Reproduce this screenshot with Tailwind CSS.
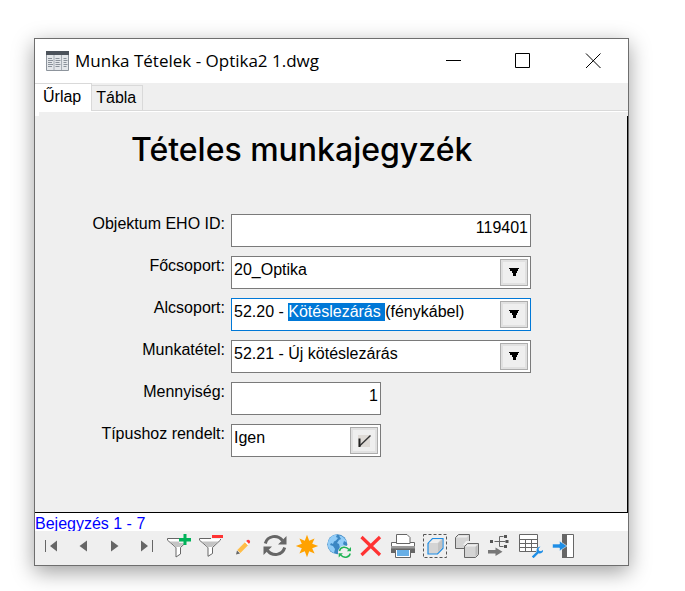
<!DOCTYPE html>
<html lang="hu">
<head>
<meta charset="utf-8">
<meta name="viewport" content="width=device-width, initial-scale=1">
<title>Munka Tételek - Optika2 1.dwg</title>
<script src="https://cdn.jsdelivr.net/npm/@tailwindcss/browser@4"></script>
</head>
<body class="flex min-h-screen bg-white pt-[38px] pr-14 pb-[25px] pl-[34px] font-['Liberation_Sans',Arial,sans-serif] text-base text-black">
<div class="flex min-w-0 flex-1 flex-col border border-[#6e6e6e] bg-[#efefef] shadow-[0_6px_20px_rgba(0,0,0,0.38)]">
  <header class="flex h-11 shrink-0 items-center bg-white pl-[11px]">
    <svg class="h-5 w-[23px] shrink-0" viewBox="0 0 23 20" aria-hidden="true">
      <path fill="#e4e7ea" stroke="#8d949c" d="M.5.5h22v19H.5z"/>
      <path fill="#4c535b" d="M0 0h23v4H0z"/>
      <path stroke="#a8aeb5" d="M8 4v15M15.500 4v15"/>
      <path stroke="#8b929a" d="M2 7.500h4M2 9.500h5M2 11.500h4M2 13.500h5M2 15.500h4M9.500 7.500h4M9.500 9.500h5M9.500 11.500h4M9.500 13.500h5M9.500 15.500h4M17.500 7.500h3M17.500 9.500h4M17.500 11.500h3M17.500 13.500h4M17.500 15.500h3"/>
    </svg>
    <h1 class="min-w-0 flex-1 truncate pl-1.5 font-['Open_Sans',sans-serif] text-[17px]">Munka Tételek - Optika2 1.dwg</h1>
    <button type="button" aria-label="Kis méret" class="grid h-11 w-[70px] place-items-center"><svg class="size-4" viewBox="0 0 16 16"><path stroke="#000" d="M1 7.500h15"/></svg></button>
    <button type="button" aria-label="Teljes méret" class="grid h-11 w-[70px] place-items-center"><svg class="size-4" viewBox="0 0 16 16"><path fill="none" stroke="#000" d="M.5.5h14v14H.5z"/></svg></button>
    <button type="button" aria-label="Bezárás" class="grid h-11 w-[70px] place-items-center"><svg class="size-4" viewBox="0 0 16 16"><path stroke="#000" d="M1 .5l14.500 14.500M15.500.5L1 15"/></svg></button>
  </header>

  <div role="tablist" class="flex h-7 shrink-0 items-end border-b border-[#d9d9d9]">
    <button role="tab" aria-selected="true" type="button" class="-mb-px flex h-7 items-center border-t border-r border-[#d9d9d9] bg-white pr-2.5 pb-0.5 pl-2">Űrlap</button>
    <button role="tab" aria-selected="false" type="button" class="flex h-[25px] items-center border-t border-r border-[#d9d9d9] pr-1.5 pl-1">Tábla</button>
  </div>
  <div class="h-[5px] shrink-0 border-t border-l-4 border-white"></div>

  <main class="flex-1 border-r border-b border-black pb-[55px]">
    <h2 class="pt-[14px] pl-24 font-['Inter','Liberation_Sans',sans-serif] text-[32px] leading-10 font-medium">Tételes munkajegyzék</h2>
    <form class="mt-11 grid grid-cols-[190px_minmax(0,300px)] gap-x-1.5 gap-y-[9px]">
      <label for="eho" class="pt-px text-right leading-[18px]">Objektum EHO ID:</label>
      <input id="eho" value="119401" class="h-[33px] w-full border border-[#7a7a7a] bg-white px-0.5 pb-1.5 text-right outline-none">

      <label for="fo" class="pt-px text-right leading-[18px]">Főcsoport:</label>
      <div class="flex h-[33px] items-center border border-[#7a7a7a] bg-white pr-0.5 pl-0.5">
        <input id="fo" role="combobox" aria-expanded="false" value="20_Optika" class="h-full min-w-0 flex-1 pb-1.5 outline-none">
        <button type="button" aria-label="Főcsoport listája" class="grid h-[27px] w-7 place-items-center border border-[#adadad] bg-[#efefef] pb-0.5 shadow-[inset_0_0_0_2px_#e1e1e1]"><svg class="h-2 w-2.5" viewBox="0 0 10 8"><path d="M0 0h10v1H9v2H8v2H7v3H4V5H3V3H1V1H0z"/></svg></button>
      </div>

      <label for="al" class="pt-px text-right leading-[18px]">Alcsoport:</label>
      <div class="flex h-[33px] items-center border border-[#0078d7] bg-white pr-0.5 pl-0.5">
        <input id="al" role="combobox" aria-expanded="false" autofocus value="52.20 - Kötéslezárás (fénykábel)" class="h-full min-w-0 flex-1 pb-1.5 outline-none selection:bg-[#0078d7] selection:text-white">
        <button type="button" aria-label="Alcsoport listája" class="grid h-[27px] w-7 place-items-center border border-[#adadad] bg-[#efefef] pb-0.5 shadow-[inset_0_0_0_2px_#e1e1e1]"><svg class="h-2 w-2.5" viewBox="0 0 10 8"><path d="M0 0h10v1H9v2H8v2H7v3H4V5H3V3H1V1H0z"/></svg></button>
      </div>

      <label for="mt" class="pt-px text-right leading-[18px]">Munkatétel:</label>
      <div class="flex h-[33px] items-center border border-[#7a7a7a] bg-white pr-0.5 pl-0.5">
        <input id="mt" role="combobox" aria-expanded="false" value="52.21 - Új kötéslezárás" class="h-full min-w-0 flex-1 pb-1.5 outline-none">
        <button type="button" aria-label="Munkatétel listája" class="grid h-[27px] w-7 place-items-center border border-[#adadad] bg-[#efefef] pb-0.5 shadow-[inset_0_0_0_2px_#e1e1e1]"><svg class="h-2 w-2.5" viewBox="0 0 10 8"><path d="M0 0h10v1H9v2H8v2H7v3H4V5H3V3H1V1H0z"/></svg></button>
      </div>

      <label for="me" class="pt-px text-right leading-[18px]">Mennyiség:</label>
      <input id="me" value="1" class="h-[33px] w-1/2 border border-[#7a7a7a] bg-white px-0.5 pb-1.5 text-right outline-none">

      <label for="ti" class="pt-px text-right leading-[18px]">Típushoz rendelt:</label>
      <div class="flex h-[33px] w-1/2 items-center border border-[#7a7a7a] bg-white pr-0.5 pl-0.5">
        <input id="ti" value="Igen" class="h-full min-w-0 flex-1 pb-1.5 outline-none">
        <button type="button" aria-label="Igen vagy nem" class="grid h-[27px] w-7 place-items-center border border-[#adadad] bg-[#efefef] shadow-[inset_0_0_0_2px_#e1e1e1]"><svg class="h-3 w-[13px]" viewBox="0 0 13 12"><path fill="#dedad6" d="M0 0h12v12H0z"/><path fill="none" stroke="#333" stroke-width="1.400" d="M1.500 11L12.500.5"/><path stroke="#222" stroke-width="2" d="M1.500 3.500V12"/></svg></button>
      </div>
    </form>
  </main>

  <p role="status" class="h-[18px] shrink-0 overflow-hidden bg-white leading-[21px] text-[#0000ff]">Bejegyzés 1 - 7</p>

  <div role="toolbar" class="flex h-[34px] shrink-0 items-start pt-[3px] *:grid *:w-8 *:place-items-center">
    <button type="button" aria-label="Első"><svg class="size-6" viewBox="0 0 24 24"><path fill="#666" d="M6 6h1v12H6zM18 6.500v11L11 12z"/></svg></button>
    <button type="button" aria-label="Előző"><svg class="size-6" viewBox="0 0 24 24"><path fill="#666" d="M16 6.500v11L8.500 12z"/></svg></button>
    <button type="button" aria-label="Következő"><svg class="size-6" viewBox="0 0 24 24"><path fill="#666" d="M8 6.500v11l7.500-5.500z"/></svg></button>
    <button type="button" aria-label="Utolsó"><svg class="size-6" viewBox="0 0 24 24"><path fill="#666" d="M17 6h1v12h-1zM6 6.500v11l7-5.500z"/></svg></button>
    <button type="button" aria-label="Szűrő hozzáadása"><svg class="size-6" viewBox="0 0 24 24"><path fill="#fff" stroke="#666" d="M.5 4.500h21V6L13.500 13.500v6.500l-4.500 3V13.500L.5 6.200z"/><path fill="#c4c4c4" d="M2.500 7.500h17L13 13H9z"/><path fill="#efefef" d="M12 3h4V0h4v3h4v6h-4v3h-3V9h-5z"/><path fill="#00b259" d="M16.500 0h3v4H24v3.500h-4.500V11h-3V7.500H12V4h4.500z"/></svg></button>
    <button type="button" aria-label="Szűrő törlése"><svg class="size-6" viewBox="0 0 24 24"><path fill="#fff" stroke="#666" d="M.5 4.500h21V6L13.500 13.500v6l-4.500 2.800V13.500L.5 6.200z"/><path fill="#c4c4c4" d="M2.500 7.500h17L13 13H9z"/><path fill="#efefef" d="M12 0h12v5H12z"/><path fill="#ff3333" d="M13 1h11v3H13z"/></svg></button>
    <button type="button" aria-label="Szerkesztés"><svg class="size-6" viewBox="0 0 24 24"><path fill="#666" d="M5 20.500l1-4 3 3z"/><path fill="#ffbd47" d="M6.300 16L14 8.200l3 3L9.400 19z"/><path fill="#fff" d="M14 8.200l1-1 3 3-1 1z"/><path fill="#ff3b3b" d="M15.200 7l1-1q1.300-.8 2.300.2t.4 2.500l-1 1z"/></svg></button>
    <button type="button" aria-label="Frissítés"><svg class="size-6" viewBox="0 0 24 24"><path fill="none" stroke="#666" stroke-width="3" d="M2.300 9.500C4.500 1.500 14.500.2 19.500 6.500M21.700 13.500C19.500 21.500 9.500 22.800 4.500 16.500"/><path fill="#666" d="M23.500 2v8.500H15zM.5 21v-8.500H9z"/></svg></button>
    <button type="button" aria-label="Új"><svg class="size-6" viewBox="0 0 24 24"><path fill="#ffa200" d="M12 .8l2.200 6 5.400-2.400-2.400 5.400 6 2.200-6 2.200 2.400 5.400-5.400-2.400-2.200 6-2.200-6-5.400 2.400 2.400-5.400-6-2.200 6-2.200-2.400-5.400 5.400 2.400z"/></svg></button>
    <button type="button" aria-label="Térkép frissítése"><svg class="size-6" viewBox="0 0 24 24"><circle cx="10.300" cy="10.300" r="10" fill="#3b87c3"/><path fill="#92cdf8" d="M3 4C5 1.300 8 .5 10 .8L9 3l2 1-2 2.500-2 1L6 10l-2-1-1 2 3 1 2 3-1 4C3 17.500.8 14 .8 10.500.8 8 1.500 6 3 4zM12 1.500c4 .5 7 3.500 7.800 7L17 7l-1 3 2 2-2 3-3-1-1-4-2-1 2-3 2-1z"/><circle cx="17.800" cy="18.200" r="6.800" fill="#efefef"/><path fill="none" stroke="#20b455" stroke-width="1.400" d="M12.500 17c1-4.500 6.500-5 9.500-1.500M23.200 19.500c-1 4.500-6.500 5-9.500 1.500"/><path fill="#20b455" d="M24 13v4.200h-4.200zM11.700 23.500v-4.200h4.200z"/></svg></button>
    <button type="button" aria-label="Törlés"><svg class="size-6" viewBox="0 0 24 24"><path stroke="#ff3333" stroke-width="3.200" d="M2.500 3l18.500 18M21 3L2.500 21"/></svg></button>
    <button type="button" aria-label="Nyomtatás"><svg class="size-6" viewBox="0 0 24 24"><path fill="#fff" stroke="#666" d="M.5 8.500h23v8H.5z"/><path fill="#fff" stroke="#666" d="M5.500.5H16l3 3v6H5.500z"/><path fill="#999" d="M0 12h24v3H0z"/><path fill="#666" d="M0 14.500h24V19H0z"/><path fill="#fff" stroke="#666" d="M4.500 15.500h15v8h-15z"/><path fill="#68afe6" d="M6 16h12v6H6z"/></svg></button>
    <button type="button" aria-label="Objektum kijelölése"><svg class="size-6" viewBox="0 0 24 24"><path fill="none" stroke="#555" stroke-dasharray="3 2" d="M.5.5h23v23H.5z"/><path fill="#d4d4d4" stroke="#1e8ee6" stroke-width="1.200" d="M5 9.500L9.500 4.500H20v9.700L14.500 20H5z"/><path fill="#eee" d="M6 9l4-3.700h8L14.500 9z"/><path fill="#c2c2c2" d="M15 9.500l4.300-4v8.300L15 18.500z"/></svg></button>
    <button type="button" aria-label="Másolás"><svg class="size-6" viewBox="0 0 24 24"><path fill="#d4d4d4" stroke="#666" d="M.5 3.500l3-3h11v11l-3 3H.5z"/><path fill="#eee" d="M1.500 3.500l2-2h10l-2 2z"/><path fill="#efefef" d="M8 11l3-4h6v4z"/><path fill="#d4d4d4" stroke="#666" d="M9.500 12.500l3-3h11v11l-3 3h-11z"/><path fill="#eee" d="M10.500 12.500l2-2h10l-2 2z"/><path fill="#bbb" d="M20.500 13l2-2v9.500l-2 2z"/></svg></button>
    <button type="button" aria-label="Kapcsolatok"><svg class="size-6" viewBox="0 0 24 24"><path fill="none" stroke="#666" d="M7.500 7.500h11M16.500 2.500h-4v10h4"/><path fill="#555" d="M3 6h3v3H3zM17 1h3v3h-3zM18.500 6h3v3h-3zM17 11h3v3h-3z"/><path fill="#777" d="M1 16h7.500v-2.500l7 4.200-7 4.300v-2.500H1z"/></svg></button>
    <button type="button" aria-label="Táblabeállítások"><svg class="size-6" viewBox="0 0 24 24"><path fill="#fff" stroke="#666" d="M.5.5h18v17H.5z"/><path fill="none" stroke="#666" d="M.5 5.500h18M.5 9.500h18M.5 13.500h18M6.500 5.500v12M12.500 5.500v12"/><path fill="#1e8ee6" stroke="#efefef" stroke-width="1" paint-order="stroke" d="M21.500 12.500c-3 .4-4.500 2.800-3.700 5.300l-5 4.700 1.800 1.700 5-4.900c2.600.7 4.600-.8 4.700-3.600l-2.300 1.500-2-.5-.5-2z"/></svg></button>
    <button type="button" aria-label="Kilépés"><svg class="size-6" viewBox="0 0 24 24"><path fill="#fff" stroke="#666" d="M11.500.5h11v23h-11z"/><path fill="#666" d="M11 0h5v24h-5z"/><path fill="#1e8ee6" stroke="#efefef" stroke-width=".6" d="M1.500 10h7V7l7.500 5-7.500 5v-3h-7z"/></svg></button>
  </div>
</div>
<script>
  const field = document.getElementById('al');
  field.focus();
  field.setSelectionRange(8, 21);
</script>
</body>
</html>
